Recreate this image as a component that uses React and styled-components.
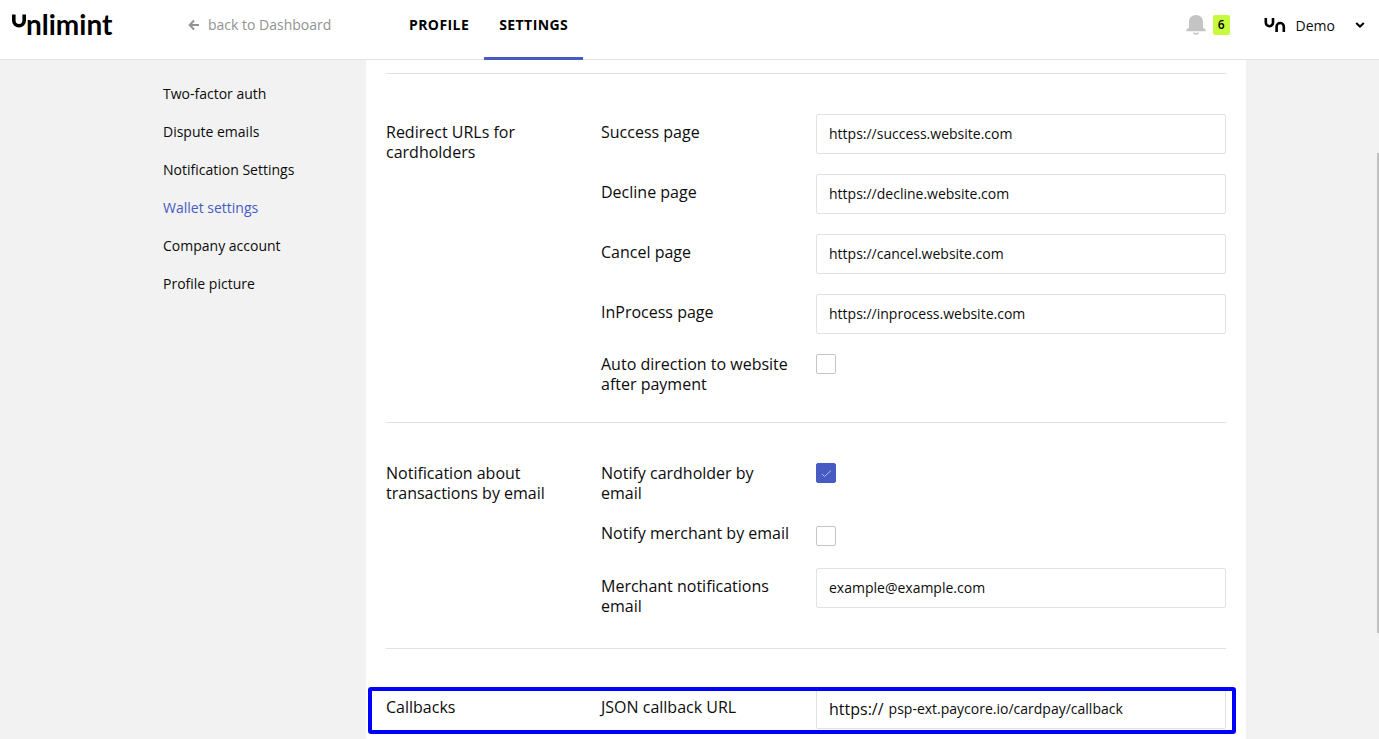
import React, { useState } from "react";
import styled, { createGlobalStyle, css } from "styled-components";

const GlobalStyle = createGlobalStyle`
  *, *::before, *::after { box-sizing: border-box; }
  body {
    margin: 0;
    background: #f2f2f2;
    color: #0c0c0c;
    font-family: "Open Sans", "Noto Sans", sans-serif;
    font-size: 14px;
    line-height: 20px;
  }
  input, button { font: inherit; color: inherit; }
`;

const Shell = styled.div`
  display: flex;
  flex-direction: column;
  height: 100vh;
  overflow: hidden;
`;

const Header = styled.header`
  display: flex;
  flex: none;
  height: 60px;
  padding: 0 14px 0 12px;
  background: #fff;
  border-bottom: 1px solid #e2e2e2;
`;

const LogoLink = styled.a`
  display: block;
  width: 176px;
  padding-top: 5px;
  color: #000;
`;

const BackLink = styled.a`
  display: flex;
  align-items: center;
  gap: 8px;
  width: 206px;
  height: 50px;
  color: #929292;
  text-decoration: none;
`;

const Tabs = styled.nav`
  display: flex;
  height: 60px;
`;

const Tab = styled.a`
  padding: 15px 15px 0;
  border-bottom: 3px solid ${(p) => (p.$active ? "#475bc5" : "transparent")};
  color: #000;
  font-weight: 700;
  letter-spacing: 0.03em;
  text-decoration: none;
`;

const Account = styled.div`
  display: flex;
  align-items: center;
  height: 50px;
  margin-left: auto;
`;

const BellButton = styled.button`
  display: flex;
  align-items: center;
  gap: 7px;
  padding: 0;
  margin-right: 34px;
  border: 0;
  background: none;
`;

const Badge = styled.span`
  width: 17px;
  height: 20px;
  border-radius: 2px;
  background: #c8fa3c;
  color: #000;
  font-size: 12px;
  font-weight: 600;
  text-align: center;
`;

const UserButton = styled.button`
  display: flex;
  align-items: center;
  gap: 10px;
  padding: 0;
  border: 0;
  background: none;
`;

const UserName = styled.span`
  margin-right: 10px;
  padding-top: 2px;
`;

const Body = styled.div`
  display: grid;
  grid-template-columns: 203px minmax(0, 1fr);
  flex: 1;
  width: 100%;
  max-width: 1113px;
  min-height: 0;
  margin: 0 auto;
  padding-left: 30px;
`;

const SideNav = styled.nav`
  display: flex;
  flex-direction: column;
  gap: 18px;
  padding-top: 24px;
`;

const SideLink = styled.a`
  color: ${(p) => (p.$active ? "#475bc5" : "inherit")};
  text-decoration: none;
`;

const Panel = styled.main`
  padding: 13px 20px 0;
  background: #fff;
`;

const Section = styled.section`
  display: grid;
  grid-template-columns: 215px minmax(0, 1fr);
  position: relative;
  padding: 40px 0 28px;
  border-top: 1px solid #e2e2e2;
`;

const labelText = css`
  margin: 0;
  padding: ${(p) => (p.$flush ? "0 20px 0 0" : "8px 20px 4px 0")};
  font-size: 16px;
  font-weight: 400;
  line-height: 20px;
`;

const SectionTitle = styled.h2`${labelText}`;

const Label = styled.label`${labelText}`;

const Rows = styled.div`
  display: flex;
  flex-direction: column;
  gap: 20px;
`;

const Row = styled.div`
  display: grid;
  grid-template-columns: 215px minmax(0, 1fr);
  align-items: start;
`;

const Field = styled.div`
  display: flex;
  align-items: center;
  gap: 5px;
  height: 40px;
  padding: 0 12px;
  border: 1px solid #e2e2e2;
  border-radius: 2px;
  background: #fff;
`;

const Prefix = styled.span`
  font-size: 16px;
`;

const TextInput = styled.input`
  flex: 1;
  min-width: 0;
  height: 20px;
  padding: 0;
  border: 0;
  outline: 0;
  background: none;
`;

const CheckCell = styled.div`
  display: grid;
  width: 20px;
  padding-top: ${(p) => (p.$low ? "3px" : "0")};
  padding-bottom: ${(p) => (p.$low ? "2px" : "0")};
`;

const CheckInput = styled.input`
  grid-area: 1 / 1;
  appearance: none;
  width: 20px;
  height: 20px;
  margin: 0;
  border: 1px solid #c4c4c4;
  border-radius: 2px;
  background: #fff;
  &:checked { border-color: #475bc5; background: #475bc5; }
`;

const CheckMark = styled.svg`
  grid-area: 1 / 1;
  pointer-events: none;
`;

const Highlight = styled.div`
  position: absolute;
  inset: 38px -10px auto -18px;
  height: 47px;
  border: 4px solid #0000fe;
  border-radius: 3px;
  pointer-events: none;
`;

const ScrollThumb = styled.div`
  position: fixed;
  top: 153px;
  right: 0;
  width: 2px;
  height: 65vh;
  background: #c1c1c1;
`;

const Logo = () => (
  <svg width="110" height="40" viewBox="0 -5 110 40" fill="none" aria-label="Unlimint">
    <path d="M1.8 4.500v6a5.200 5.200 0 0 0 10.400 0v-6" stroke="#000" strokeWidth="3.600" />
    <text x="14" y="25" fill="#000" fontFamily="Lato" fontWeight="700" fontSize="28">nlimint</text>
  </svg>
);

const UserMark = () => (
  <svg width="22" height="16" viewBox="0 0 22 16" fill="none" stroke="#000" strokeWidth="2.6" aria-hidden="true">
    <path d="M1.8 1v4.6a3.6 3.6 0 0 0 7.2 0V1M12.6 15V9.6a3.6 3.6 0 0 1 7.2 0V15" />
  </svg>
);

const Bell = () => (
  <svg width="20" height="20" viewBox="0 0 20 20" fill="#c4c4c4" aria-hidden="true">
    <path d="M10 0C5.7 0 3 3 3 7v5.4L.3 15v1.2h19.4V15L17 12.400V7c0-4-2.700-7-7-7z" />
    <path d="M7 17.400h1.600c.4.8 2.400.8 2.800 0H13c-.3 3-5.700 3-6 0z" />
  </svg>
);

const BackArrow = () => (
  <svg width="12" height="12" viewBox="0 0 12 12" fill="none" stroke="currentColor" strokeWidth="2" aria-hidden="true">
    <path d="M6 1.500 1.700 6 6 10.500M2 6h9" />
  </svg>
);

const Chevron = () => (
  <svg width="10" height="8" viewBox="0 0 10 8" fill="none" stroke="#000" strokeWidth="2" aria-hidden="true">
    <path d="m1.200 2 3.800 3.600L8.800 2" />
  </svg>
);

function TextRow({ id, label, value, prefix }) {
  const [text, setText] = useState(value);
  return (
    <Row>
      <Label htmlFor={id}>{label}</Label>
      <Field>
        {prefix && <Prefix>{prefix}</Prefix>}
        <TextInput id={id} type="text" value={text} onChange={(e) => setText(e.target.value)} />
      </Field>
    </Row>
  );
}

function CheckRow({ id, label, initial = false, low = false }) {
  const [checked, setChecked] = useState(initial);
  return (
    <Row>
      <Label htmlFor={id} $flush>{label}</Label>
      <CheckCell $low={low}>
        <CheckInput id={id} type="checkbox" checked={checked} onChange={(e) => setChecked(e.target.checked)} />
        {checked && (
          <CheckMark width="20" height="20" viewBox="0 0 20 20" fill="none" stroke="#b4bde8">
            <path d="m6 11 2.500 2.500L15 7.500" />
          </CheckMark>
        )}
      </CheckCell>
    </Row>
  );
}

const sideItems = [
  "Two-factor auth",
  "Dispute emails",
  "Notification Settings",
  "Wallet settings",
  "Company account",
  "Profile picture",
];

export default function App() {
  return (
    <Shell>
      <GlobalStyle />
      <Header>
        <LogoLink href="#"><Logo /></LogoLink>
        <BackLink href="#dashboard"><BackArrow />back to Dashboard</BackLink>
        <Tabs>
          <Tab href="#profile">PROFILE</Tab>
          <Tab href="#settings" $active>SETTINGS</Tab>
        </Tabs>
        <Account>
          <BellButton type="button" aria-label="Notifications"><Bell /><Badge>6</Badge></BellButton>
          <UserButton type="button"><UserMark /><UserName>Demo</UserName><Chevron /></UserButton>
        </Account>
      </Header>
      <Body>
        <SideNav>
          {sideItems.map((item) => (
            <SideLink key={item} href="#" $active={item === "Wallet settings"}>{item}</SideLink>
          ))}
        </SideNav>
        <Panel>
          <Section>
            <SectionTitle>Redirect URLs for cardholders</SectionTitle>
            <Rows>
              <TextRow id="success" label="Success page" value="https://success.website.com" />
              <TextRow id="decline" label="Decline page" value="https://decline.website.com" />
              <TextRow id="cancel" label="Cancel page" value="https://cancel.website.com" />
              <TextRow id="inprocess" label="InProcess page" value="https://inprocess.website.com" />
              <CheckRow id="auto" label="Auto direction to website after payment" />
            </Rows>
          </Section>
          <Section>
            <SectionTitle $flush>Notification about transactions by email</SectionTitle>
            <Rows>
              <CheckRow id="cardholder" label="Notify cardholder by email" initial />
              <CheckRow id="merchant" label="Notify merchant by email" low />
              <TextRow id="email" label="Merchant notifications email" value="example@example.com" />
            </Rows>
          </Section>
          <Section>
            <SectionTitle>Callbacks</SectionTitle>
            <Rows>
              <TextRow id="callback" label="JSON callback URL" prefix="https://" value="psp-ext.paycore.io/cardpay/callback" />
            </Rows>
            <Highlight />
          </Section>
        </Panel>
      </Body>
      <ScrollThumb />
    </Shell>
  );
}
